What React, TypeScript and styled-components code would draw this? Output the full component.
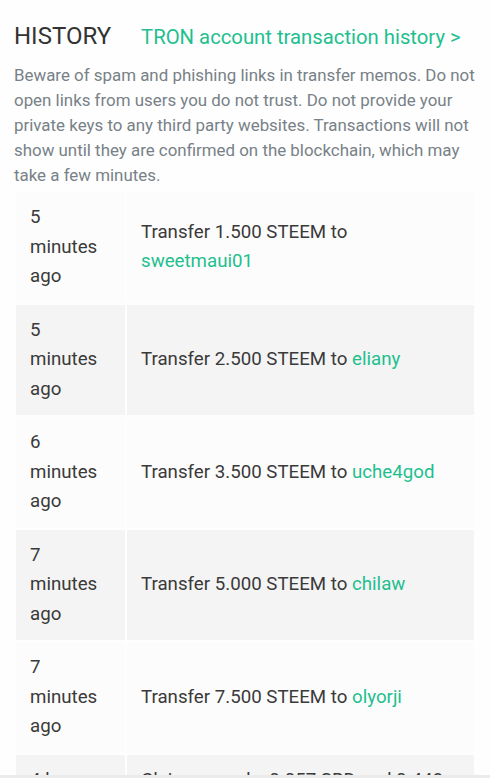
import React from "react";
import styled, { createGlobalStyle } from "styled-components";

const Global = createGlobalStyle`
  html, body { margin: 0; padding: 0; background: #fefefe; }
  body { font-family: Roboto, "Noto Sans", "Liberation Sans", sans-serif; color: #333; overflow: hidden; }
`;

const Page = styled.div`
  padding: 14px 14px 0;
`;

const Header = styled.div`
  display: flex;
  align-items: baseline;
  gap: 30px;
  margin-top: 8px;
`;

const Title = styled.h2`
  margin: 0;
  font-size: 24px;
  font-weight: 400;
  color: #333;
`;

const Link = styled.a`
  color: #1fbf8f;
  text-decoration: none;
  font-size: 20.3px;
`;

const Note = styled.p`
  margin: 13px 0 2px;
  font-size: 16.9px;
  line-height: 25px;
  color: #788187;
`;

const Table = styled.table`
  width: 100%;
  border-collapse: separate;
  border-spacing: 2px;
  font-size: 18.7px;
  line-height: 29.5px;
  color: #3a3a3a;
`;

const Row = styled.tr<{ $odd: boolean }>`
  background: ${(p) => (p.$odd ? "#fcfcfc" : "#f4f4f4")};
`;

const TimeCell = styled.td`
  width: 81px;
  padding: 11px 14px;
  vertical-align: middle;
`;

const DescCell = styled.td`
  padding: 11px 14px;
  vertical-align: middle;
`;

const User = styled.a`
  color: #1fbf8f;
  text-decoration: none;
`;

const BottomBar = styled.div`
  position: fixed;
  left: 0;
  right: 0;
  bottom: 0;
  height: 3px;
  background: #ebebeb;
`;

const rows = [
  { time: "5 minutes ago", amt: "1.500", to: "sweetmaui01" },
  { time: "5 minutes ago", amt: "2.500", to: "eliany" },
  { time: "6 minutes ago", amt: "3.500", to: "uche4god" },
  { time: "7 minutes ago", amt: "5.000", to: "chilaw" },
  { time: "7 minutes ago", amt: "7.500", to: "olyorji" },
];

export default function App() {
  return (
    <>
      <Global />
      <Page>
        <Header>
          <Title>HISTORY</Title>
          <Link href="#">TRON account transaction history &gt;</Link>
        </Header>
        <Note>
          Beware of spam and phishing links in transfer memos. Do not open links from users you do not trust. Do not
          provide your private keys to any third party websites. Transactions will not show until they are confirmed on
          the blockchain, which may take a few minutes.
        </Note>
        <Table>
          <tbody>
            {rows.map((r, i) => (
              <Row key={i} $odd={i % 2 === 0}>
                <TimeCell>{r.time}</TimeCell>
                <DescCell>
                  Transfer {r.amt} STEEM to <User href="#">{r.to}</User>
                </DescCell>
              </Row>
            ))}
            <Row $odd={false}>
              <TimeCell>4 hours ago</TimeCell>
              <DescCell>Claim rewards: 0.057 SBD and 0.448 STEEM and 0.962 STEEM POWER</DescCell>
            </Row>
          </tbody>
        </Table>
      </Page>
      <BottomBar />
    </>
  );
}
